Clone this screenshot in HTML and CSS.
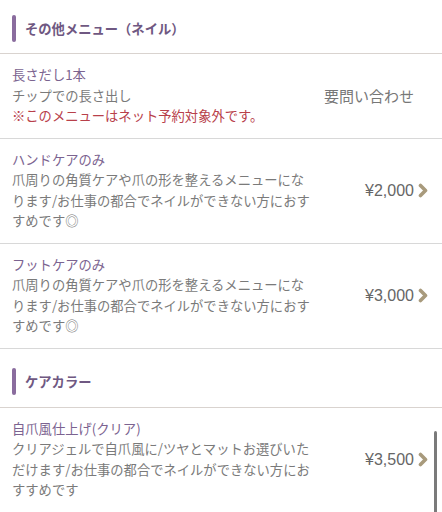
FILE: index.html
```html
<!DOCTYPE html>
<html lang="ja">
<head>
  <meta charset="UTF-8">
  <meta name="viewport" content="width=device-width, initial-scale=1.0">
  <title>メニュー</title>
  <link rel="stylesheet" href="styles.css">
</head>
<body>
  <div class="menu">
    <section class="section">
      <h2 class="section-title">その他メニュー（ネイル）</h2>
      <div class="item">
        <div class="item-text">
          <div class="item-name">長さだし1本</div>
          <div class="item-desc">チップでの長さ出し</div>
          <div class="item-note">※このメニューはネット予約対象外です。</div>
        </div>
        <div class="item-price">
          <span class="ask">要問い合わせ</span>
          <span class="chevron-slot"></span>
        </div>
      </div>
      <div class="item">
        <div class="item-text">
          <div class="item-name">ハンドケアのみ</div>
          <div class="item-desc">爪周りの角質ケアや爪の形を整えるメニューになります/お仕事の都合でネイルができない方におすすめです◎</div>
        </div>
        <div class="item-price">
          <span class="price">¥2,000</span>
          <svg class="chevron" width="11" height="15" viewBox="0 0 11 15"><path d="M2.5 2.5l5 5-5 5" fill="none" stroke="#a89a7c" stroke-width="3.6" stroke-linecap="round" stroke-linejoin="round"/></svg>
        </div>
      </div>
      <div class="item">
        <div class="item-text">
          <div class="item-name">フットケアのみ</div>
          <div class="item-desc">爪周りの角質ケアや爪の形を整えるメニューになります/お仕事の都合でネイルができない方におすすめです◎</div>
        </div>
        <div class="item-price">
          <span class="price">¥3,000</span>
          <svg class="chevron" width="11" height="15" viewBox="0 0 11 15"><path d="M2.5 2.5l5 5-5 5" fill="none" stroke="#a89a7c" stroke-width="3.6" stroke-linecap="round" stroke-linejoin="round"/></svg>
        </div>
      </div>
    </section>

    <section class="section">
      <h2 class="section-title">ケアカラー</h2>
      <div class="item">
        <div class="item-text">
          <div class="item-name">自爪風仕上げ(クリア)</div>
          <div class="item-desc">クリアジェルで自爪風に/ツヤとマットお選びいただけます/お仕事の都合でネイルができない方におすすめです</div>
        </div>
        <div class="item-price">
          <span class="price">¥3,500</span>
          <svg class="chevron" width="11" height="15" viewBox="0 0 11 15"><path d="M2.5 2.5l5 5-5 5" fill="none" stroke="#a89a7c" stroke-width="3.6" stroke-linecap="round" stroke-linejoin="round"/></svg>
        </div>
      </div>
    </section>
  </div>
  <div class="scrollbar"></div>
</body>
</html>
```

FILE: styles.css
```css
body {
  margin: 0;
  padding: 0;
  background: #fff;
  font-family: "Noto Sans CJK JP", "Noto Sans", sans-serif;
  color: #777;
  overflow: hidden;
}

.menu {
  padding-top: 3px;
}

.section + .section {
  margin-top: 8px;
}

.section-title {
  display: flex;
  align-items: center;
  height: 50px;
  margin: 0;
  padding-left: 12px;
  font-size: 13.3px;
  font-weight: bold;
  color: #6f5882;
  border-bottom: 1px solid #d9d3cf;
}

.section-title::before {
  content: "";
  width: 4px;
  height: 27px;
  margin-right: 9px;
  border-radius: 2px;
  background: #8a6c9e;
}

.item {
  display: flex;
  align-items: center;
  padding: 11px 13px 11px 12px;
  border-bottom: 1px solid #d8d8d8;
}

.item-text {
  width: 300px;
  font-size: 13.3px;
  line-height: 20.5px;
}

.item-name {
  color: #7b6390;
}

.item-desc {
  color: #7a7a7a;
}

.item-note {
  color: #b8404a;
}

.item-price {
  flex: 1;
  display: flex;
  align-items: center;
  justify-content: flex-end;
}

.ask {
  font-size: 15px;
  color: #777;
}

.price {
  font-family: "Liberation Sans", Arial, sans-serif;
  font-size: 16px;
  color: #666;
}

.chevron {
  margin-left: 4px;
}

.chevron-slot {
  width: 15px;
}

.scrollbar {
  position: absolute;
  left: 434px;
  top: 431px;
  width: 3px;
  height: 90px;
  border-radius: 2px;
  background: #7a7a7a;
}
```
